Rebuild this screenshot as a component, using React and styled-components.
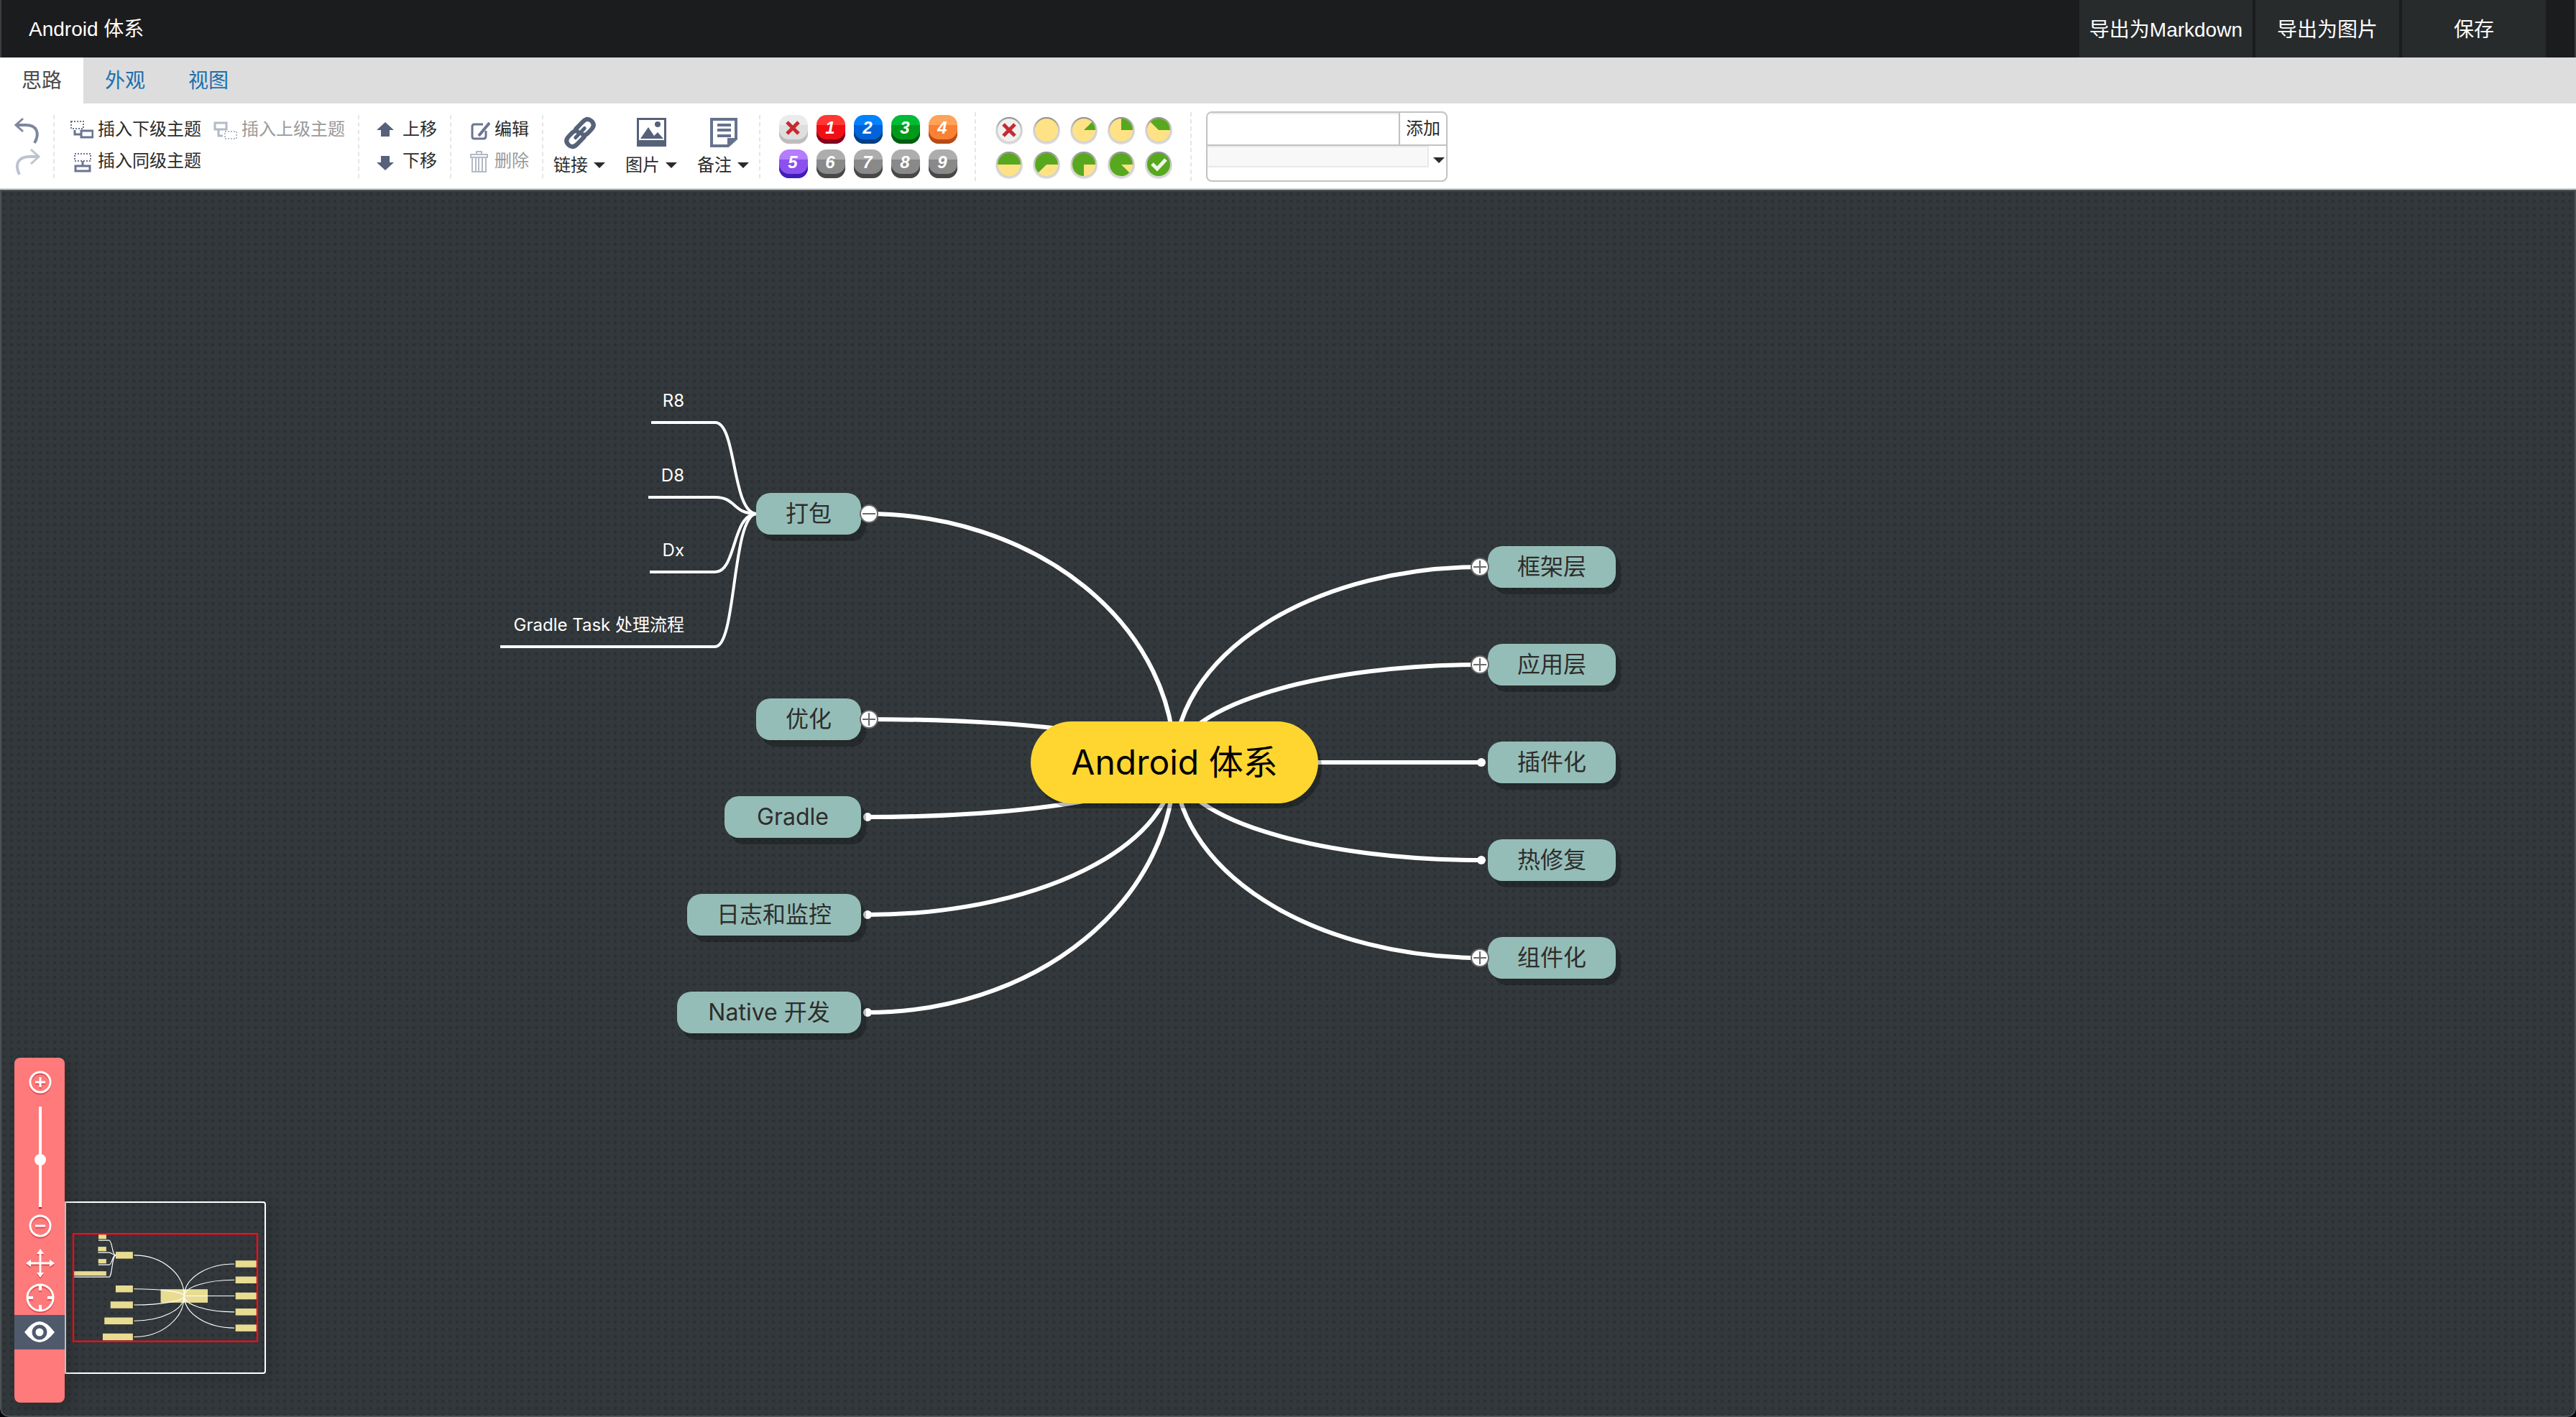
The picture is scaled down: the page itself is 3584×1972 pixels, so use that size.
import React from "react";
import styled, { createGlobalStyle, css } from "styled-components";

const UI_FONT = '"Liberation Sans", "Noto Sans CJK SC", sans-serif';
const MAP_FONT = 'Inter, "Noto Sans CJK SC", sans-serif';

const GlobalStyle = createGlobalStyle`
  *, *::before, *::after { box-sizing: border-box; }
  body { margin: 0; background: #05070a; font-family: ${UI_FONT}; }
  button, input { font-family: inherit; }
`;

const bareButton = css`
  margin: 0;
  padding: 0;
  border: 0;
  background: none;
  color: inherit;
  cursor: pointer;
`;

/* ---------- page frame ---------- */

const Page = styled.div`
  display: flex;
  flex-direction: column;
  min-height: 100vh;
`;

const Header = styled.header`
  display: flex;
  align-items: stretch;
  justify-content: space-between;
  height: 80px;
  padding: 0 42px 0 40px;
  background: #1b1c1e;
  box-shadow: inset 2px 0 #3b3d40, inset -2px 0 #3b3d40;
  color: #fff;
`;

const Title = styled.h1`
  margin: 0;
  padding-top: 2px;
  font-size: 28px;
  font-weight: 400;
  line-height: 78px;
`;

const HeaderActions = styled.nav`
  display: flex;
  gap: 4px;
`;

const HeaderButton = styled.button`
  ${bareButton}
  min-width: 200px;
  padding: 4px 14px 0;
  background: #272b2c;
  font-size: 28px;
  line-height: 40px;
`;

const Tabs = styled.div`
  display: flex;
  height: 64px;
  background: #ddd;
`;

const Tab = styled.button`
  ${bareButton}
  padding: 2px 30px 0;
  background: ${(p) => (p.$active ? "#fff" : "transparent")};
  color: ${(p) => (p.$active ? "#4a4a4a" : "#1b6fae")};
  font-size: 28px;
  line-height: 62px;
`;

/* ---------- toolbar ---------- */

const Toolbar = styled.div`
  display: flex;
  align-items: center;
  height: 120px;
  padding: 2px 0 0 2px;
  border-bottom: 2px solid #cfd0d1;
  background: #fff;
  color: #2b2b2b;
`;

const Group = styled.div`
  display: grid;
  grid-template-rows: 44px 44px;
  grid-auto-flow: column;
  column-gap: 14px;
  padding: 0 18px;
  border-right: 2px dashed #e6e6e6;
`;

const HistoryButton = styled.button`
  ${bareButton}
  width: 36px;
  height: 44px;
  opacity: ${(p) => (p.disabled ? 0.5 : 1)};
  svg { display: block; overflow: visible; }
`;

const ToolButton = styled.button`
  ${bareButton}
  display: flex;
  align-items: center;
  gap: 6px;
  height: 40px;
  font-size: 24px;
  line-height: 40px;
  white-space: nowrap;
  color: ${(p) => (p.disabled ? "#9a9a9a" : "#2b2b2b")};
  svg { opacity: ${(p) => (p.disabled ? 0.5 : 1)}; flex: none; }
`;

const MenuGroup = styled.div`
  display: flex;
  height: 88px;
  border-right: 2px dashed #e6e6e6;
`;

const MenuButton = styled.button`
  ${bareButton}
  display: flex;
  flex-direction: column;
  align-items: center;
  width: 100px;
  font-size: 24px;
  line-height: 36px;
`;

const MenuLabel = styled.span`
  display: flex;
  align-items: center;
  gap: 8px;
  padding-top: 4px;
`;

const Caret = styled.span`
  width: 0;
  height: 0;
  border: 8px solid transparent;
  border-top-color: #2b2b2b;
  border-bottom: 0;
`;

const MarkerGroup = styled.div`
  display: grid;
  grid-template-columns: repeat(5, 40px);
  column-gap: 12px;
  row-gap: ${(p) => p.$rowGap}px;
  align-content: center;
  height: 96px;
  padding: ${(p) => p.$top}px 24px 0 26px;
  border-right: 2px dashed #e6e6e6;
`;

const Priority = styled.button`
  ${bareButton}
  display: flex;
  align-items: center;
  justify-content: center;
  height: 40px;
  padding: 0 2px 4px 0;
  border-radius: 14px;
  background: linear-gradient(${(p) => p.$tone[0]} 14px, ${(p) => p.$tone[1]} 14px);
  box-shadow: inset 0 -6px ${(p) => p.$tone[2]};
  color: #fff;
  font-size: 24px;
  font-weight: 700;
  font-style: italic;
  line-height: 32px;
`;

const Progress = styled.button`
  ${bareButton}
  height: 36px;
  svg { display: block; overflow: visible; }
`;

const ResourcePanel = styled.form`
  width: 336px;
  height: 98px;
  margin-left: 20px;
  border: 2px solid #c2c2c2;
  border-radius: 8px;
  background: #fff;
  overflow: hidden;
`;

const ResourceEntry = styled.div`
  display: flex;
  height: 46px;
  border-bottom: 2px solid #c2c2c2;
`;

const ResourceInput = styled.input`
  flex: 1;
  min-width: 0;
  padding: 0 8px;
  border: 0;
  outline: 0;
  background: #fff;
  box-shadow: inset 0 2px 2px #e9e9e9;
  font-size: 24px;
`;

const AddButton = styled.button`
  ${bareButton}
  width: 66px;
  border-left: 2px solid #c2c2c2;
  font-size: 24px;
  line-height: 40px;
`;

const ResourceList = styled.div`
  display: flex;
  align-items: flex-start;
  height: 48px;
`;

const ResourceTags = styled.div`
  flex: 1;
  height: 30px;
  border: solid #e9e9e9;
  border-width: 2px 2px 2px 0;
  background: #f8f8f8;
`;

const ListToggle = styled.button`
  ${bareButton}
  display: flex;
  justify-content: flex-end;
  width: 24px;
  padding: 16px 2px 0 0;
`;

/* ---------- mind map ---------- */

const Canvas = styled.main`
  position: relative;
  flex: 1;
  min-height: 1200px;
  overflow: hidden;
  border-radius: 0 0 12px 12px;
  background-color: #32383b;
  background-image: radial-gradient(circle at 6px 6px, #2a2f32 1px, transparent 3px);
  background-size: 10px 10px;
  box-shadow: inset 0 0 0 2px #4d5255;
  clip-path: inset(0 round 0 0 12px 12px);
  font-family: ${MAP_FONT};
`;

const Wires = styled.svg`
  position: absolute;
  inset: 0;
  width: 100%;
  height: 100%;
`;

const Node = styled.button`
  ${bareButton}
  position: absolute;
  left: ${(p) => p.$box.x}px;
  top: ${(p) => p.$box.y}px;
  width: ${(p) => p.$box.w}px;
  height: ${(p) => p.$box.h}px;
  white-space: nowrap;
`;

const RootNode = styled(Node)`
  border-radius: 57px;
  background: #ffd630;
  box-shadow: 5px 7px rgba(0, 0, 0, 0.28);
  color: #000;
  font-size: 48px;
  line-height: 112px;
`;

const TopicNode = styled(Node)`
  border-radius: 20px;
  background: #95bdb7;
  box-shadow: 7px 9px rgba(0, 0, 0, 0.25);
  color: #2d2d2d;
  font-size: 32px;
  line-height: 56px;
`;

const LeafNode = styled(Node)`
  display: flex;
  align-items: center;
  justify-content: flex-end;
  padding-right: 20px;
  color: #fff;
  font-size: 24px;
  line-height: 36px;
`;

const Expander = styled.button`
  ${bareButton}
  position: absolute;
  left: ${(p) => p.$x - 13}px;
  top: ${(p) => p.$y - 13}px;
  width: 26px;
  height: 26px;
  svg { display: block; }
`;

/* ---------- navigator ---------- */

const Navigator = styled.aside`
  position: absolute;
  left: 20px;
  bottom: 20px;
  display: flex;
  flex-direction: column;
  align-items: center;
  width: 70px;
  padding: 10px 0 74px;
  border-radius: 8px;
  background: #ff7a7a;
  box-shadow: 6px 6px 20px rgba(0, 0, 0, 0.2);
`;

const NavButton = styled.button`
  ${bareButton}
  width: 100%;
  height: 48px;
  background: ${(p) => (p.$active ? "#4f5a6d" : "transparent")};
  svg {
    display: block;
    margin: 0 auto;
    filter: drop-shadow(0 2px 0 ${(p) => (p.$active ? "transparent" : "#e24a50")});
  }
`;

const ZoomSlider = styled.input`
  appearance: none;
  writing-mode: vertical-lr;
  direction: rtl;
  width: 16px;
  height: 142px;
  margin: 10px 0 0 2px;
  background: linear-gradient(#fff 140px, #e60012 140px) center / 4px 100% no-repeat;
  &::-webkit-slider-thumb {
    appearance: none;
    width: 16px;
    height: 16px;
    border-radius: 50%;
    background: #fff;
  }
`;

const NavGap = styled.div`
  height: 4px;
`;

const Preview = styled.div`
  position: absolute;
  left: 90px;
  bottom: 60px;
  width: 280px;
  height: 240px;
  border: 2px solid #fff;
  border-left-color: #ddd;
  border-radius: 0 4px 4px 0;
  background-color: #32383b;
  background-image: radial-gradient(circle at 4px 4px, #2a2f32 1px, transparent 3px);
  background-size: 10px 10px;
  box-shadow: 6px 6px 20px rgba(0, 0, 0, 0.15);
  svg { display: block; width: 100%; height: 100%; }
`;

/* ---------- data ---------- */

const TOP = 264;
const box = (x, y, w, h) => ({ x, y: y - TOP, w, h });

const ROOT = { text: "Android 体系", box: box(1434, 1004, 400, 114) };
const HUB = { x: 1634, y: 1061 - TOP };

const LEFT = [
  { text: "打包", box: box(1052, 686, 146, 58), fold: "minus" },
  { text: "优化", box: box(1052, 972, 146, 58), fold: "plus" },
  { text: "Gradle", box: box(1008, 1108, 190, 58) },
  { text: "日志和监控", box: box(956, 1244, 242, 58) },
  { text: "Native 开发", box: box(942, 1380, 256, 58) },
];

const RIGHT = [
  { text: "框架层", box: box(2070, 760, 178, 58), fold: "plus" },
  { text: "应用层", box: box(2070, 896, 178, 58), fold: "plus" },
  { text: "插件化", box: box(2070, 1032, 178, 58) },
  { text: "热修复", box: box(2070, 1168, 178, 58) },
  { text: "组件化", box: box(2070, 1304, 178, 58), fold: "plus" },
];

const LEAVES = [
  { text: "R8", box: box(906, 539, 66, 38) },
  { text: "D8", box: box(902, 643, 70, 38) },
  { text: "Dx", box: box(904, 747, 68, 38) },
  { text: "Gradle Task 处理流程", box: box(696, 851, 276, 38) },
];

const TOPICS = [
  ...LEFT.map((t) => ({ ...t, side: "left", ax: 1207, fx: 1209, ay: t.box.y + 29 })),
  ...RIGHT.map((t) => ({ ...t, side: "right", ax: 2061, fx: 2059, ay: t.box.y + 29 })),
];

const arcPath = ({ ax, ay }) => {
  const dx = HUB.x - ax;
  const dy = HUB.y - ay;
  if (dy === 0) return `M${ax} ${ay}H${HUB.x}`;
  return `M${ax} ${ay}A${Math.abs(dx)} ${Math.abs(dy)} 0 0 ${dx * dy > 0 ? 1 : 0} ${HUB.x} ${HUB.y}`;
};

const leafPath = ({ box: b }) => {
  const y = b.y + 49;
  const end = 715 - TOP;
  return `M${b.x} ${y}H995C1025 ${y} 1018 ${end} 1053 ${end}`;
};

const GREY = ["#adadad", "#898989", "#484848"];
const PRIORITIES = [
  ["#ff3834", "#f00f15", "#83001f"],
  ["#0082ff", "#0063d9", "#003f82"],
  ["#00bb36", "#009a1a", "#005d12"],
  ["#ffa25a", "#fa8033", "#b54c18"],
  ["#b47cff", "#8b50ee", "#3f1db8"],
  GREY,
  GREY,
  GREY,
  GREY,
];

/* ---------- drawings ---------- */

const INK = "#56617a";

const Undo = () => (
  <svg width="36" height="44" fill="none" stroke="#7d879e" strokeWidth="3">
    <path d="M12 5 2 14l10 9" />
    <path d="M2 14h14c15 0 20 11 12 25" strokeWidth="4" />
  </svg>
);

const Redo = () => (
  <svg width="36" height="44" fill="none" stroke="#7d879e" strokeWidth="3">
    <path d="m23 4 11 10-11 10" />
    <path d="M34 14H22C5 14 0 24 7 39" strokeWidth="4" />
  </svg>
);

const ChildIcon = () => (
  <svg width="36" height="36" fill="none" stroke="#6b7590">
    <rect x="5" y="7" width="17" height="10" strokeWidth="2" strokeDasharray="2 2" />
    <path d="M10 19v6h9" strokeWidth="3" />
    <rect x="19" y="20" width="16" height="9" strokeWidth="3" />
  </svg>
);

const ParentIcon = () => (
  <svg width="36" height="36" fill="none" stroke="#6b7590">
    <rect x="5" y="9" width="16" height="9" strokeWidth="3" />
    <path d="M10 19v8h6" strokeWidth="3" />
    <rect x="19" y="21" width="16" height="10" strokeWidth="2" strokeDasharray="2 2" />
  </svg>
);

const SiblingIcon = () => (
  <svg width="36" height="36" fill="none" stroke="#6b7590">
    <rect x="10" y="8" width="22" height="10" strokeWidth="2" strokeDasharray="2 2" />
    <path d="M21 18v6" strokeWidth="3" />
    <rect x="11" y="25" width="20" height="7" strokeWidth="3" />
  </svg>
);

const UpIcon = () => (
  <svg width="36" height="36" fill={INK}>
    <path d="M18 8 30 19h-6v9H12v-9H6z" />
  </svg>
);

const DownIcon = () => (
  <svg width="36" height="36" fill={INK}>
    <path d="M18 31 6 20h6V11h12v9h6z" />
  </svg>
);

const EditIcon = () => (
  <svg width="36" height="36" fill="none" stroke="#6b7590" strokeWidth="3">
    <path d="M26 11H14q-3 0-3 3v14q0 3 3 3h13q3 0 3-4v-7" />
    <path d="M20 27 35 9" strokeWidth="4" />
  </svg>
);

const TrashIcon = () => (
  <svg width="36" height="36" fill="none" stroke="#6b7590" strokeWidth="2">
    <path d="M17 9V5h7v4M9 9h23v4H9zM11 13v20h19V13M16 14v18M20 14v18M25 14v18" />
  </svg>
);

const LinkIcon = () => (
  <svg width="48" height="48" fill="none" stroke={INK} strokeWidth="6" strokeLinecap="round">
    <g transform="translate(1 0) rotate(-46 24 25)">
      <path d="M24 17h14q9 0 9 8t-9 8h-6q-6 0-7-4" />
      <path d="M24 33H10q-9 0-9-8t9-8h6q6 0 7 4" />
      <path d="M15 25h18" strokeWidth="5" />
    </g>
  </svg>
);

const ImageIcon = () => (
  <svg width="48" height="48" fill={INK}>
    <path fillRule="evenodd" d="M4 4h41v40H4zM7 7v28h35V7z" />
    <path d="m9 33 11-16 8 12 5-5 8 9z" />
    <circle cx="33" cy="13" r="4" />
  </svg>
);

const NoteIcon = () => (
  <svg width="48" height="48" fill="none" stroke="#66728f">
    <path d="M8 6h34v27L31 43H8z" strokeWidth="4" />
    <path d="M31 43V33h11z" fill="#66728f" strokeWidth="2" />
    <path d="M16 14h19M16 21h19M16 29h19" strokeWidth="4" />
  </svg>
);

const CrossMark = ({ size = 20 }) => (
  <svg width={size} height={size} viewBox="0 0 20 20" stroke="#c62a30" strokeWidth="5">
    <path d="M2 2l16 16M18 2 2 18" />
  </svg>
);

const ProgressIcon = ({ step }) => {
  const a = (-(step - 1) * Math.PI) / 4;
  const ex = 20 + 16 * Math.cos(a);
  const ey = 17 + 16 * Math.sin(a);
  return (
    <svg width="40" height="36">
      <defs>
        <linearGradient id={`rim${step}`} x1="0" y1="0" x2="0" y2="1">
          <stop offset="0" stopColor="#8c8c8c" />
          <stop offset="0.5" stopColor="#cfcfcf" />
          <stop offset="1" stopColor="#d4d4d4" />
        </linearGradient>
      </defs>
      <circle cx="20" cy="18" r="19" fill="#dcdcdc" />
      <circle cx="20" cy="17" r="18" fill={`url(#rim${step})`} />
      <circle cx="20" cy="17" r="16" fill={step === 0 ? "#f1f0f1" : step === 9 ? "#57a81f" : "#ffe285"} />
      {step > 1 && step < 9 && (
        <path d={`M20 17H36A16 16 0 ${step > 5 ? 1 : 0} 0 ${ex} ${ey}Z`} fill="#57a81f" />
      )}
      {step === 0 && <path d="m12 9 16 16M28 9 12 25" stroke="#c62a30" strokeWidth="5" />}
      {step === 9 && <path d="m11 16 7 7L30 10" fill="none" stroke="#f0f5ea" strokeWidth="5" />}
    </svg>
  );
};

const ZoomIcon = ({ plus }) => (
  <svg width="48" height="48" fill="none" stroke="#fff" strokeWidth="3">
    <circle cx="25" cy="24" r="14" />
    <path d={plus ? "M18 24h14M25 17v14" : "M18 24h14"} />
  </svg>
);

const MoveIcon = () => (
  <svg width="48" height="48" fill="#fff" stroke="#fff">
    <path d="M25 8v32M9 24h32" strokeWidth="3" />
    <path d="m25 4 5 7H20zM25 44l5-7H20zM5 24l7-5v10zM45 24l-7-5v10z" stroke="none" />
  </svg>
);

const TargetIcon = () => (
  <svg width="48" height="48" fill="none" stroke="#fff" strokeWidth="3">
    <circle cx="25" cy="24" r="18" />
    <path d="M25 6v8M25 34v8M7 24h8M35 24h8" strokeWidth="4" />
  </svg>
);

const EyeIcon = () => (
  <svg width="48" height="48">
    <path d="M3 24Q14 9 24 9t21 15Q34 38 24 38T3 24z" fill="#fff" />
    <circle cx="24" cy="24" r="8" fill="#fff" stroke="#4f5a6d" strokeWidth="5" />
  </svg>
);

/* ---------- sections ---------- */

const Connections = ({ branch = 6, leaf = 4 }) => (
  <g fill="none" stroke="#fff">
    {TOPICS.map((t) => (
      <path key={t.text} d={arcPath(t)} strokeWidth={branch} />
    ))}
    {LEAVES.map((l) => (
      <path key={l.text} d={leafPath(l)} strokeWidth={leaf} />
    ))}
  </g>
);

const PreviewMap = () => (
  <svg viewBox="631 6 1685 1441" role="img" aria-label="缩略图">
    <g fill="#e8dc92">
      {[ROOT, ...TOPICS, ...LEAVES].map(({ text, box: b }) => (
        <rect key={text} x={b.x} y={b.y} width={b.w} height={b.h} />
      ))}
    </g>
    <Connections branch={7} leaf={7} />
    <rect x="692" y="269" width="1563" height="914" fill="none" stroke="#ff0a18" strokeWidth="14" />
  </svg>
);

const ToolbarSection = () => (
  <Toolbar>
    <Group>
      <HistoryButton aria-label="撤销"><Undo /></HistoryButton>
      <HistoryButton aria-label="重做" disabled><Redo /></HistoryButton>
    </Group>
    <Group>
      <ToolButton><ChildIcon />插入下级主题</ToolButton>
      <ToolButton><SiblingIcon />插入同级主题</ToolButton>
      <ToolButton disabled><ParentIcon />插入上级主题</ToolButton>
    </Group>
    <Group>
      <ToolButton><UpIcon />上移</ToolButton>
      <ToolButton><DownIcon />下移</ToolButton>
    </Group>
    <Group>
      <ToolButton><EditIcon />编辑</ToolButton>
      <ToolButton disabled><TrashIcon />删除</ToolButton>
    </Group>
    <MenuGroup>
      <MenuButton><LinkIcon /><MenuLabel>链接<Caret /></MenuLabel></MenuButton>
      <MenuButton><ImageIcon /><MenuLabel>图片<Caret /></MenuLabel></MenuButton>
      <MenuButton><NoteIcon /><MenuLabel>备注<Caret /></MenuLabel></MenuButton>
    </MenuGroup>
    <MarkerGroup $rowGap={8} $top={0}>
      <Priority $tone={["#ebebeb", "#dedede", "#bdbdbd"]} aria-label="移除优先级"><CrossMark /></Priority>
      {PRIORITIES.map((tone, i) => (
        <Priority key={i} $tone={tone}>{i + 1}</Priority>
      ))}
    </MarkerGroup>
    <MarkerGroup $rowGap={12} $top={4}>
      {Array.from({ length: 10 }, (_, i) => (
        <Progress key={i} aria-label={`进度 ${i}`}><ProgressIcon step={i} /></Progress>
      ))}
    </MarkerGroup>
    <ResourcePanel onSubmit={(e) => e.preventDefault()}>
      <ResourceEntry>
        <ResourceInput type="text" aria-label="资源" />
        <AddButton>添加</AddButton>
      </ResourceEntry>
      <ResourceList>
        <ResourceTags />
        <ListToggle type="button" aria-label="展开资源"><Caret /></ListToggle>
      </ResourceList>
    </ResourcePanel>
  </Toolbar>
);

const MindMap = () => (
  <>
    <Wires>
      <Connections />
      <g fill="#fff">
        {TOPICS.filter((t) => !t.fold).map((t) => (
          <circle key={t.text} cx={t.ax} cy={t.ay} r="6" />
        ))}
      </g>
    </Wires>
    <RootNode $box={ROOT.box}>{ROOT.text}</RootNode>
    {LEAVES.map((l) => (
      <LeafNode key={l.text} $box={l.box}>{l.text}</LeafNode>
    ))}
    {TOPICS.map((t) => (
      <TopicNode key={t.text} $box={t.box}>{t.text}</TopicNode>
    ))}
    {TOPICS.filter((t) => t.fold).map((t) => (
      <Expander key={t.text} $x={t.fx} $y={t.ay} aria-label={t.fold === "plus" ? "展开" : "收起"}>
        <svg width="26" height="26" stroke="#6a6a6a" strokeWidth="2">
          <circle cx="13" cy="13" r="12" fill="#fff" />
          <path d={t.fold === "plus" ? "M4 13h18M13 4v18" : "M4 13h18"} />
        </svg>
      </Expander>
    ))}
  </>
);

export default function App() {
  return (
    <Page>
      <GlobalStyle />
      <Header>
        <Title>Android 体系</Title>
        <HeaderActions>
          <HeaderButton>导出为Markdown</HeaderButton>
          <HeaderButton>导出为图片</HeaderButton>
          <HeaderButton>保存</HeaderButton>
        </HeaderActions>
      </Header>
      <Tabs role="tablist">
        <Tab role="tab" aria-selected="true" $active>思路</Tab>
        <Tab role="tab" aria-selected="false">外观</Tab>
        <Tab role="tab" aria-selected="false">视图</Tab>
      </Tabs>
      <ToolbarSection />
      <Canvas>
        <MindMap />
        <Preview><PreviewMap /></Preview>
        <Navigator>
          <NavButton aria-label="放大"><ZoomIcon plus /></NavButton>
          <ZoomSlider type="range" min="0" max="100" defaultValue="48" aria-label="缩放" />
          <NavButton aria-label="缩小"><ZoomIcon /></NavButton>
          <NavGap />
          <NavButton aria-label="拖动"><MoveIcon /></NavButton>
          <NavButton aria-label="定位根节点"><TargetIcon /></NavButton>
          <NavButton aria-label="导航器" $active><EyeIcon /></NavButton>
        </Navigator>
      </Canvas>
    </Page>
  );
}
